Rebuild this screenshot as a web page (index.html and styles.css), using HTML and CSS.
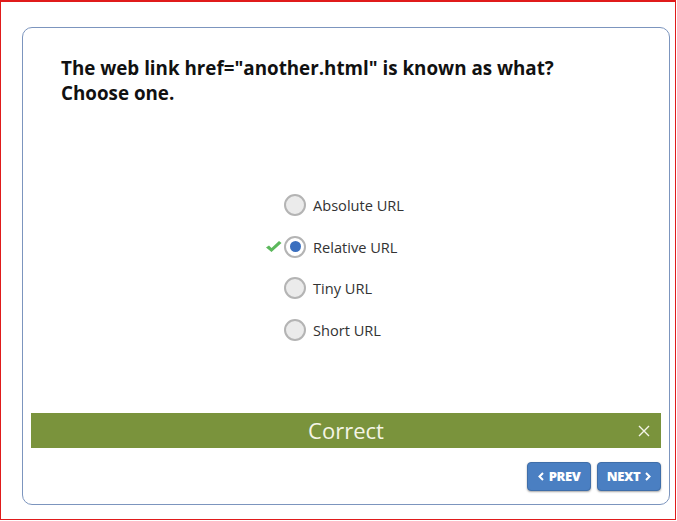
FILE: index.html
```html
<!DOCTYPE html>
<html>
<head>
<meta charset="utf-8">
<link rel="stylesheet" href="styles.css">
</head>
<body>
<div class="frame">
  <div class="card">
    <div class="question">The web link href="another.html" is known as what?<br>Choose one.</div>
    <div class="options-wrap">
      <ul class="options">
        <li class="option"><span class="radio"></span><span class="label">Absolute URL</span></li>
        <li class="option selected">
          <svg class="check" width="17" height="13" viewBox="0 0 17 13"><path d="M1 7.5 L4 5.5 L6.5 8 L14 1 L16.5 3 L6.5 12 Z" fill="#5cb85c"/></svg>
          <span class="radio"><span class="dot"></span></span><span class="label">Relative URL</span></li>
        <li class="option"><span class="radio"></span><span class="label">Tiny URL</span></li>
        <li class="option"><span class="radio"></span><span class="label">Short URL</span></li>
      </ul>
    </div>
    <div class="feedback">
      <span class="feedback-text">Correct</span>
      <svg class="close" width="12" height="12" viewBox="0 0 12 12"><path d="M1 1 L11 11 M11 1 L1 11" stroke="#f4f4e8" stroke-width="1.4" fill="none"/></svg>
    </div>
    <div class="nav">
      <button class="btn"><svg width="6" height="9" viewBox="0 0 6 9"><path d="M5 1 L1.5 4.5 L5 8" stroke="#fff" stroke-width="2" fill="none"/></svg>PREV</button>
      <button class="btn">NEXT<svg width="6" height="9" viewBox="0 0 6 9"><path d="M1 1 L4.5 4.5 L1 8" stroke="#fff" stroke-width="2" fill="none"/></svg></button>
    </div>
  </div>
</div>
</body>
</html>
```
FILE: styles.css
```css
html, body {
  margin: 0;
  padding: 0;
  background: #ffffff;
}
.frame {
  box-sizing: border-box;
  width: 676px;
  height: 520px;
  border: 1px solid #e01b1b;
  border-top-width: 2px;
  padding: 25px 0 0 21px;
  font-family: "Open Sans", "Liberation Sans", sans-serif;
}
.card {
  box-sizing: border-box;
  width: 648px;
  height: 478px;
  border: 1px solid #7c95be;
  border-radius: 10px;
  padding: 0 8px 0 8px;
  display: flex;
  flex-direction: column;
}
.question {
  margin-top: 28px;
  padding-left: 30px;
  font-size: 18.8px;
  line-height: 25px;
  font-weight: 700;
  color: #111;
}
.options-wrap {
  margin-top: 78.5px;
  display: flex;
  justify-content: center;
  padding-right: 4px;
}
.options {
  list-style: none;
  margin: 0;
  padding: 0;
}
.option {
  position: relative;
  height: 41.6px;
  display: flex;
  align-items: center;
  font-size: 14.6px;
  color: #333;
}
.radio {
  box-sizing: border-box;
  width: 22px;
  height: 22px;
  border-radius: 50%;
  border: 2px solid #b4b4b4;
  background: #ebebeb;
  display: flex;
  align-items: center;
  justify-content: center;
  margin-right: 7px;
}
.selected .radio {
  background: #fff;
}
.dot {
  width: 11px;
  height: 11px;
  border-radius: 50%;
  background: #3a6fbf;
}
.check {
  position: absolute;
  left: -19px;
  top: 14px;
}
.feedback {
  margin-top: 62px;
  height: 35px;
  background: #7a933c;
  position: relative;
  display: flex;
  align-items: center;
  justify-content: center;
}
.feedback-text {
  color: #f5f5e6;
  font-size: 22px;
  font-weight: 400;
}
.close {
  position: absolute;
  right: 11px;
  top: 12px;
}
.nav {
  margin-top: 14px;
  display: flex;
  justify-content: flex-end;
  gap: 6px;
}
.btn {
  box-sizing: border-box;
  width: 64px;
  height: 29px;
  background: #4a7fc2;
  border: 1px solid #3f6ea9;
  border-radius: 4px;
  box-shadow: 0 1px 2px rgba(0,0,0,0.35);
  color: #fff;
  font-family: "Open Sans", "Liberation Sans", sans-serif;
  font-weight: 800;
  font-size: 13px;
  display: flex;
  align-items: center;
  justify-content: center;
  gap: 5px;
  padding: 0;
  letter-spacing: -0.4px;
}
```
